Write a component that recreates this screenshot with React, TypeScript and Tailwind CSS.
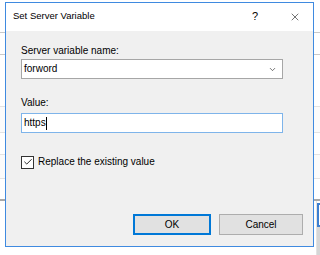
import { Check, ChevronDown, X } from 'lucide-react';

const font = { fontFamily: '"Liberation Sans", Arial, sans-serif' };

function Backdrop() {
  // what peeks out behind the dialog: a grid-like list with thin separators
  return (
    <div className="flex flex-col w-[320px] h-[255px] bg-white">
      <div className="h-[33px] border-b border-[#c9c9c9]" />
      <div className="h-[22px] border-b border-[#c9c9c9]" />
      <div className="h-[52px] border-b border-[#e3e3e3]" />
      <div className="h-[26px] border-b border-[#e3e3e3] bg-[#fbfbfb]" />
      <div className="h-[22px] border-b border-[#e3e3e3]" />
      <div className="h-[24px] border-b border-[#e3e3e3] bg-[#fbfbfb]" />
      <div className="h-[22px] border-b-2 border-[#a8a8a8]" />
      <div className="flex flex-1">
        <div className="flex-1 border-r border-[#e3e3e3]" />
        <div className="w-[3px] flex flex-col pt-[2px]">
          <div className="h-[24px] border-y-2 border-l-2 border-[#3c7fd0]" />
          <div className="flex-1 bg-[#d6d6d6]" />
        </div>
      </div>
    </div>
  );
}

export default function App() {
  return (
    <div className="relative w-[320px] h-[255px] overflow-hidden text-[10px] text-black" style={font}>
      <Backdrop />
      <div className="absolute left-[5px] top-[2px] w-[309px] h-[245px] flex flex-col border border-[#3f8ae0] bg-[#f0f0f0]">
        <div className="h-[28px] bg-white flex items-center pl-[7px] pr-[12px] pb-[1px]">
          <span className="flex-1 text-[9.5px]">Set Server Variable</span>
          <span className="w-[10px] text-center mr-[29px] text-[11px]">?</span>
          <X className="w-[12px] h-[12px]" strokeWidth={1.1} />
        </div>
        <div className="flex flex-col flex-1 pl-[15px] pr-[10px] pt-[12px] pb-[11px]">
          <div className="h-[16px] leading-[16px]">Server variable name:</div>
          <div className="w-[262px] h-[20px] flex items-center bg-white border border-[#a6a6a6] pl-[2px] pr-[5px]">
            <span className="flex-1 leading-[16px]">forword</span>
            <ChevronDown className="w-[9px] h-[9px] text-[#333]" strokeWidth={1.8} />
          </div>
          <div className="h-[16px] leading-[16px] mt-[16px]">Value:</div>
          <div className="w-[262px] h-[20px] mt-[2px] flex items-center bg-white border border-[#7eb4ea] pl-[2px]">
            <span className="leading-[16px]">https</span>
            <span className="w-px h-[13px] bg-black" />
          </div>
          <label className="flex items-center gap-[4px] mt-[21px] h-[16px]">
            <span className="w-[13px] h-[13px] border border-[#333] bg-white flex items-center justify-center">
              <Check className="w-[10px] h-[10px]" strokeWidth={2} />
            </span>
            <span className="leading-[16px]">Replace the existing value</span>
          </label>
          <div className="flex-1" />
          <div className="flex justify-end gap-[8px]">
            <button className="w-[78px] h-[21px] bg-[#e1e1e1] border-2 border-[#0078d7] leading-[16px]">OK</button>
            <button className="w-[84px] h-[21px] bg-[#e1e1e1] border border-[#adadad] leading-[16px]">Cancel</button>
          </div>
        </div>
      </div>
    </div>
  );
}
